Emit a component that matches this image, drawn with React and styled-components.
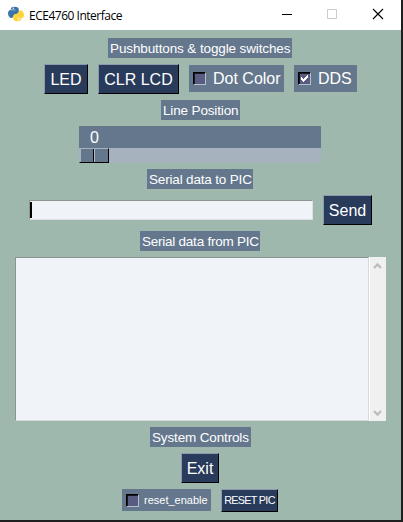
import React from "react";
import styled, { createGlobalStyle } from "styled-components";

const Global = createGlobalStyle`
  * { box-sizing: border-box; }
  body { margin: 0; background: #1f1f1f; overflow: hidden; }
`;

const Window = styled.div`
  width: 401px;
  height: 520px;
  background: #9fb8ad;
  font-family: "Liberation Sans", Arial, sans-serif;
  color: #fff;
`;

const TitleBar = styled.header`
  height: 30px;
  background: #fff;
  display: flex;
  align-items: center;
  padding-left: 8px;
  color: #000;
`;

const Title = styled.span`
  flex: 1;
  margin-left: 6px;
  font: 12px/31px "Open Sans", sans-serif;
  letter-spacing: ${(p) => p.$spacing}px;
  white-space: nowrap;
  height: 30px;
`;

const Logo = styled.svg`
  width: 16px;
  height: 16px;
  margin-top: -2px;
  margin-right: -1px;
`;

const WindowControls = styled.svg`
  width: 120px;
  height: 30px;
`;

const Body = styled.main`
  width: 401px;
  padding-top: 8px;
  display: flex;
  flex-direction: column;
`;

const Row = styled.div`
  display: flex;
  align-items: flex-start;
  gap: 10px;
  margin: ${(p) => p.$top || 0}px 0 0 ${(p) => p.$left}px;
`;

const Label = styled.div`
  width: ${(p) => p.$w}px;
  height: 20px;
  padding-left: 2px;
  background: #64778d;
  font-size: 13.5px;
  line-height: 21px;
  letter-spacing: ${(p) => p.$spacing || 0}px;
  white-space: nowrap;
`;

const Button = styled.button`
  width: ${(p) => p.$w}px;
  height: ${(p) => (p.$small ? 23 : 30)}px;
  padding: ${(p) => (p.$small ? 0 : 2)}px 0 0;
  border: 1px solid;
  border-color: #8d99ae #000 #000 #8d99ae;
  border-radius: 0;
  background: #283b5b;
  color: #fff;
  font-family: inherit;
  font-size: ${(p) => (p.$small ? 10.8 : 16)}px;
  line-height: ${(p) => (p.$small ? 21 : 26)}px;
  letter-spacing: ${(p) => p.$spacing || 0}px;
  white-space: nowrap;
`;

const CheckField = styled.label`
  display: flex;
  align-items: center;
  width: ${(p) => p.$w}px;
  height: ${(p) => (p.$small ? 22 : 27)}px;
  margin-top: ${(p) => (p.$small ? 0 : 1)}px;
  padding-left: 4px;
  gap: ${(p) => (p.$small ? 5 : 7)}px;
  background: #64778d;
  font-size: ${(p) => (p.$small ? 11 : 16)}px;
  white-space: nowrap;
`;

const Box = styled.span`
  display: flex;
  flex: none;
  width: 13px;
  height: 13px;
  background: #5a5b82;
  border: 1px solid;
  border-color: #000 #b4c0ca #b4c0ca #000;
  box-shadow: inset 1px 1px #17171f;
`;

const Slider = styled.div`
  width: 242px;
  margin: 6px 0 0 79px;
  background: #64778d;
`;

const SliderValue = styled.div`
  height: 22px;
  padding-left: 11px;
  font-size: 16px;
  line-height: 23px;
`;

const Track = styled.div`
  height: 15px;
  background: #a6b2be;
`;

const Thumb = styled.div`
  display: flex;
  width: 30px;
  height: 15px;
  border: 1px solid;
  border-color: #a6b2be #000 #000 #a6b2be;
`;

const ThumbHalf = styled.span`
  flex: 1;
  background: #64778d;
  border: solid #a6b2be;
  border-width: 0 0 0 1px;
  & + & { border-left-color: #b4bdc7; }
  &:first-child { box-shadow: inset -1px 0 #000; }
`;

const Entry = styled.div`
  width: 284px;
  height: 20px;
  margin-top: 5px;
  padding: 1px 0 0 0;
  background: #f0f3f7;
  border: 1px solid;
  border-color: #8c9490 #dde1e1 #dde1e1 #8c9490;
`;

const Caret = styled.div`
  width: 2px;
  height: 16px;
  background: #000;
`;

const OutputArea = styled.div`
  display: flex;
  height: 164px;
  margin: 6px 0 0 15px;
`;

const Output = styled.div`
  width: 354px;
  background: #f0f3f7;
  border: 1px solid;
  border-color: #8c9490 #d2dadb #d2dadb #8c9490;
`;

const ScrollBar = styled.div`
  width: 17px;
  border-left: 1px solid #fff;
  background: #f0f0f0;
  display: flex;
  flex-direction: column;
  justify-content: space-between;
`;

const Chevron = ({ down }) => (
  <svg width="16" height="17" viewBox="0 0 16 17">
    <path d={down ? "M4 7 7.5 10.5 11 7" : "M4 11 7.5 7.5 11 11"} fill="none" stroke="#bcbcbc" strokeWidth="2.3" />
  </svg>
);

const Check = ({ checked, children, ...rest }) => (
  <CheckField {...rest}>
    <Box>
      {checked && (
        <svg width="11" height="11" viewBox="0 0 11 11" shapeRendering="crispEdges">
          <path d="M2 4h1v1h1v1h1v-1h1v-1h1v-1h1v-1h1v3h-1v1h-1v1h-1v1h-1v1h-1v-1h-1v-1h-1z" fill="#fff" />
        </svg>
      )}
    </Box>
    <span>{children}</span>
  </CheckField>
);

export default function App() {
  return (
    <>
      <Global />
      <Window>
        <TitleBar>
          <Logo viewBox="0 0 16 16">
            <path d="M2.8 3Q2.8.8 6.5.8q4.300 0 4.300 2.700v2.200Q10.800 8 8 8.200 6 8.400 5 11 4.200 12.500 2.300 11.700 0 10.500 0 7.500 0 4.200 2.800 4z" fill="#3975a9" />
            <path d="M13.200 13q0 2.300-3.700 2.300-4.300 0-4.300-2.700v-2.200q0-2.200 2.800-2.400 2-.2 3-2.800.8-1.500 2.700-.7 2.300 1.200 2.300 4.200 0 3.300-2.800 3.500z" fill="#ffd43b" />
            <path d="M3 3.900h4.300M8.700 12.200H13" stroke="#fff" strokeWidth=".5" />
            <circle cx="5.200" cy="2.300" r=".7" fill="#fff" />
            <circle cx="10.800" cy="13.800" r=".7" fill="#fff" />
          </Logo>
          <Title $spacing={-0.49}>ECE4760 Interface</Title>
          <WindowControls viewBox="281 0 120 30">
            <path d="M282 14.5h10" stroke="#000" />
            <path d="M327.5 9.5h9v9h-9z" fill="none" stroke="#ccc" />
            <path d="M373 9l10 10M383 9l-10 10" stroke="#000" strokeWidth="1.2" />
          </WindowControls>
        </TitleBar>
        <Body>
          <Row $left={108}><Label $w={184} $spacing={-0.12}>Pushbuttons &amp; toggle switches</Label></Row>
          <Row $left={44} $top={6}>
            <Button $w={44}>LED</Button>
            <Button $w={81}>CLR LCD</Button>
            <Check $w={95}>Dot Color</Check>
            <Check $w={63} checked>DDS</Check>
          </Row>
          <Row $left={161} $top={6}><Label $w={79} $spacing={-0.15}>Line Position</Label></Row>
          <Slider>
            <SliderValue>0</SliderValue>
            <Track><Thumb><ThumbHalf /><ThumbHalf /></Thumb></Track>
          </Slider>
          <Row $left={147} $top={6}><Label $w={106} $spacing={-0.17}>Serial data to PIC</Label></Row>
          <Row $left={29} $top={6}>
            <Entry><Caret /></Entry>
            <Button $w={49}>Send</Button>
          </Row>
          <Row $left={140} $top={6}><Label $w={120} $spacing={-0.24}>Serial data from PIC</Label></Row>
          <OutputArea>
            <Output />
            <ScrollBar><Chevron /><Chevron down /></ScrollBar>
          </OutputArea>
          <Row $left={150} $top={6}><Label $w={101} $spacing={-0.15}>System Controls</Label></Row>
          <Row $left={181} $top={6}><Button $w={38}>Exit</Button></Row>
          <Row $left={122} $top={6}>
            <Check $w={89} $small>reset_enable</Check>
            <Button $w={57} $small $spacing={-0.7}>RESET PIC</Button>
          </Row>
        </Body>
      </Window>
    </>
  );
}
